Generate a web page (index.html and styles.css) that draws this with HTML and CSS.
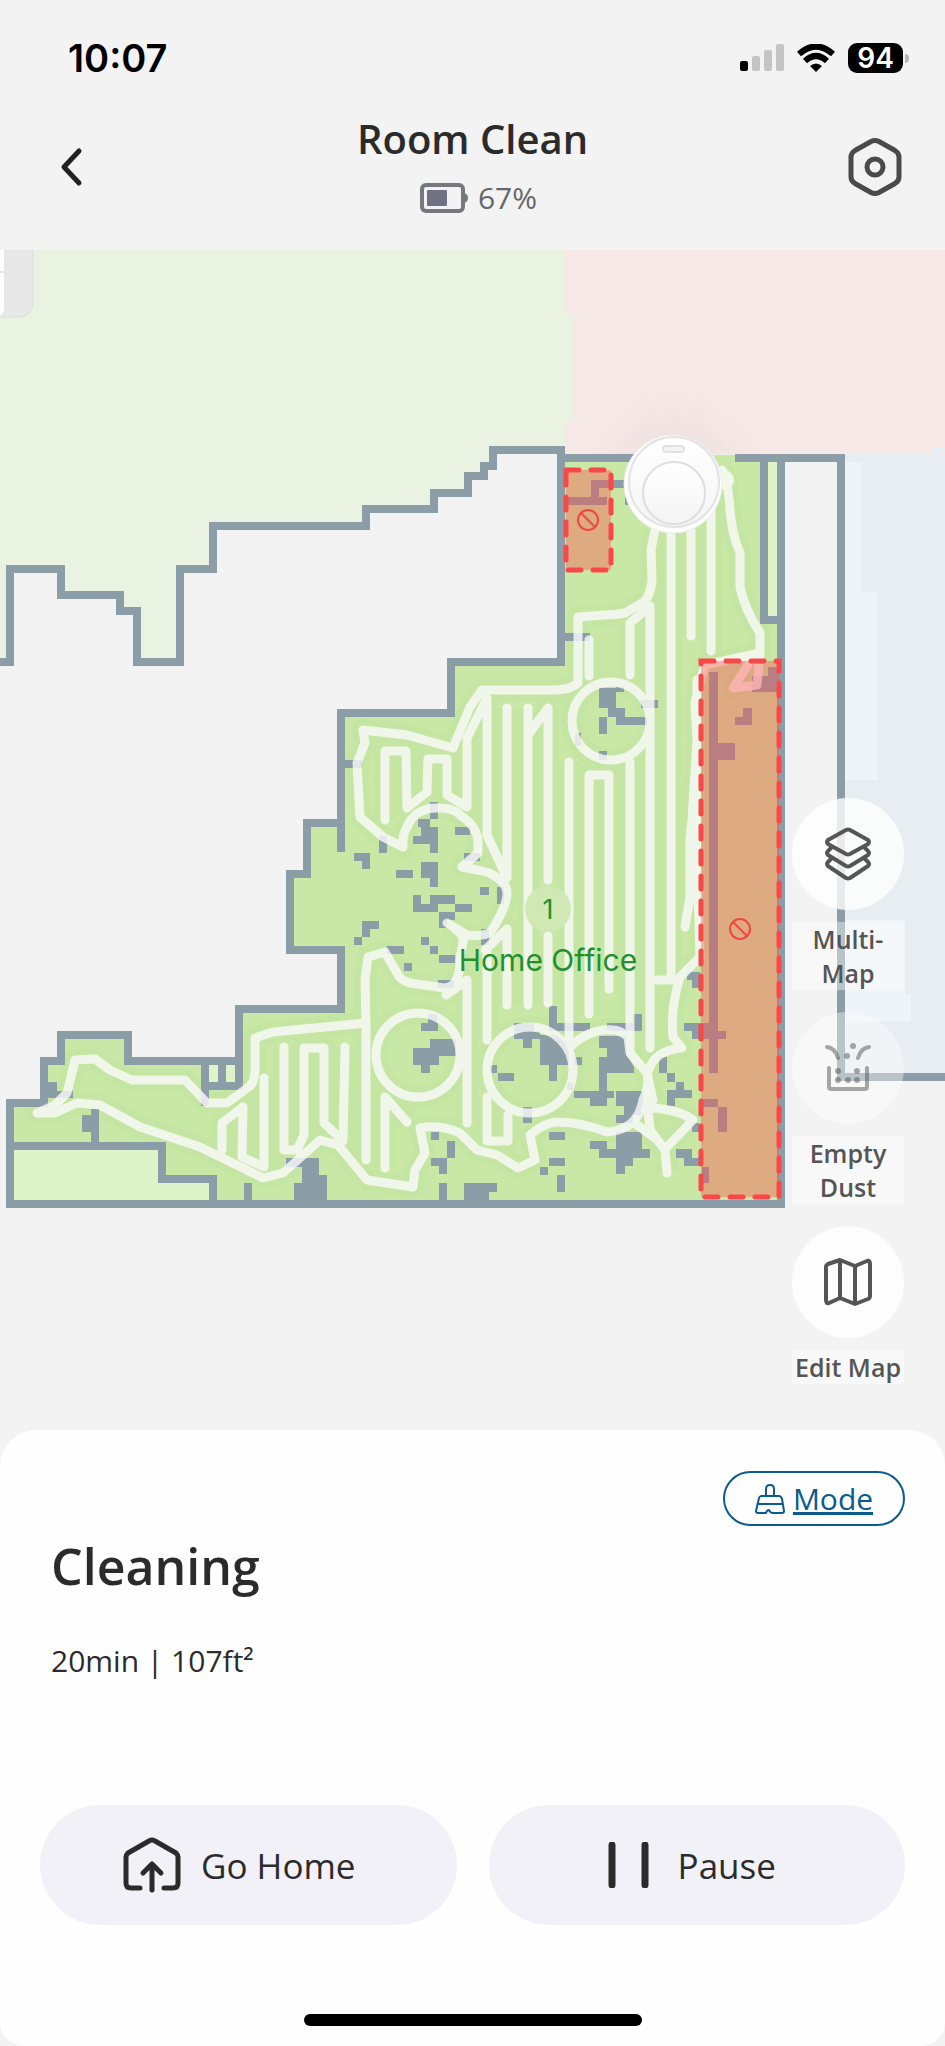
FILE: index.html
```html
<!DOCTYPE html>
<html lang="en">
<head>
    <meta charset="UTF-8">
    <meta name="viewport" content="width=device-width, initial-scale=1.0">
    <title>Room Clean</title>
    <link rel="stylesheet" href="styles.css">
</head>
<body>
    <div class="app">
        <div class="status-bar">
            <span class="clock">10:07</span>
            <div class="status-icons">
                <svg width="44" height="28" viewBox="0 0 44 28">
                    <rect x="0" y="17" width="8" height="10" rx="2" fill="#000"/>
                    <rect x="12" y="12" width="8" height="15" rx="2" fill="#c4c4c4"/>
                    <rect x="24" y="6" width="8" height="21" rx="2" fill="#c4c4c4"/>
                    <rect x="36" y="0" width="8" height="27" rx="2" fill="#c4c4c4"/>
                </svg>
                <svg width="38" height="28" viewBox="0 0 38 28">
                    <path d="M2 10Q19 -5 36 10" fill="none" stroke="#000" stroke-width="6"/>
                    <path d="M8 17Q19 7 30 17" fill="none" stroke="#000" stroke-width="6"/>
                    <path d="M13 22Q19 17 25 22L19 28Z"/>
                </svg>
                <div class="phone-battery"><span class="phone-battery-level">94</span></div>
            </div>
        </div>

        <header class="header">
            <button class="icon-button" aria-label="Back">
                <svg width="32" height="42" viewBox="0 0 32 42">
                    <path d="M23 5L8 21L23 37" fill="none" stroke="#222" stroke-width="5" stroke-linecap="round" stroke-linejoin="round"/>
                </svg>
            </button>
            <div class="header-center">
                <h1>Room Clean</h1>
                <div class="battery">
                    <svg width="48" height="30" viewBox="0 0 48 30">
                        <rect x="2" y="2" width="41" height="26" rx="4" fill="none" stroke="#77787c" stroke-width="4"/>
                        <rect x="7" y="7" width="20" height="16" rx="1" fill="#6f7282"/>
                        <path d="M44 10Q48 11 48 15Q48 19 44 20Z" fill="#77787c"/>
                    </svg>
                    <span>67%</span>
                </div>
            </div>
            <button class="icon-button settings" aria-label="Settings">
                <svg width="56" height="60" viewBox="0 0 56 60">
                    <path d="M24 4.500Q28 2.500 32 4.500L48 13.500Q52 16 52 20V40Q52 44 48 46.500L32 55.500Q28 57.500 24 55.500L8 46.500Q4 44 4 40V20Q4 16 8 13.500Z" fill="none" stroke="#4a4a4a" stroke-width="5"/>
                    <circle cx="28" cy="30" r="8" fill="none" stroke="#4a4a4a" stroke-width="5"/>
                </svg>
            </button>
        </header>

        <main class="map">
            <svg class="floor-plan" viewBox="0 250 945 1180">
                <defs>
                    <radialGradient id="glow">
                        <stop offset="0.4" stop-color="#a08888" stop-opacity="0.06"/>
                        <stop offset="1" stop-color="#a08888" stop-opacity="0"/>
                    </radialGradient>
                    <linearGradient id="robotBody" x1="0" y1="0" x2="0" y2="1">
                        <stop offset="0" stop-color="#fff"/>
                        <stop offset="1" stop-color="#f4f4f4"/>
                    </linearGradient>
                    <path id="room" d="M561 455H781V1204H10V1103H44V1061H61V1035H128V1061H239V1009H341V950H290V874H307V823H341V713H451V662H561Z"/>
                    <g id="track">
                        <path d="M655 530L651 550L652 580Q650 600 640 604L625 613Q615 615 605 615L578 617V683Q570 690 553 690H482L470 707L453 748L407 735L363 730L365 743L357 763L360 817L383 837L403 847Q402 835 407 827Q415 808 437 808Q455 808 460 815Q476 825 478 840V853L462 867Q490 872 493 875Q507 883 507 893Q507 907 490 933Q480 937 467 935L447 923"/>
                        <path d="M455 929Q465 935 463 943Q460 955 460 965Q458 988 444 988L410 983Q400 980 397 973L385 952L368 957L365 980L366 1023V1160M366 1023L273 1032L255 1038V1063Q256 1080 250 1086L227 1103H207L185 1080H132L110 1070L95 1059L75 1060L67 1093L55 1105L37 1113H55L77 1103L100 1105L140 1127L200 1147L263 1178L283 1173L320 1140L338 1145L367 1180L413 1187L415 1170L425 1153L420 1128Q440 1124 460 1133L477 1150L497 1155L518 1168L535 1160L530 1135Q545 1122 557 1122Q580 1122 607 1132Q638 1130 643 1100Q650 1085 647 1073L630 1053L628 1037Q620 1030 613 1030Q590 1028 570 1047"/>
                        <path d="M647 1073L652 1063Q660 1050 682 1048L673 1037Q670 1010 680 977L700 957M647 1073L653 1100L648 1110L650 1130L665 1150L667 1173M633 1122L655 1138M653 1108Q680 1110 693 1120L667 1147"/>
                        <circle cx="530" cy="1070" r="43"/>
                        <circle cx="418" cy="1055" r="42"/>
                        <circle cx="611" cy="721" r="39"/>
                        <path d="M222 1150V1123L243 1107L242 1157L264 1167V1078M284 1047V1150H297L304 1135V1048H324V1123L343 1141L345 1047M385 1168V1097L407 1122M467 1123V980L446 995"/>
                        <path d="M385 820V751H406L407 808L427 792L428 759H447V795L467 807V738L487 698V835L507 878V708M528 708V1005M528 735L548 708V880M487 950V1040M485 950L507 929V1005M548 936V1003M569 762V1047M589 1014V775H609V989M630 762V1050M650 1048V606L630 623V675M650 980H671V530M691 530V636M711 500V651M589 640V676M487 1097V1141H508V1115"/>
                        <path d="M722 470Q728 480 730 510Q732 535 740 553V587Q745 610 760 633V653L757 685L733 688L748 665M760 653L705 665Q700 680 695 703L697 740L692 820L690 840V897L685 927M697 680V860M700 957L696 830"/>
                    </g>
                </defs>

                <!-- neighbouring rooms -->
                <path d="M0 250H565V313H573V421H565V450H493V466H484V476H468V493H434V509H366V526H213V569H180V662H137V611H120V595H61V569H10V662H0Z" fill="#eaf3e2"/>
                <path d="M841 454H931V447H945V1077H841Z" fill="#e7edf1"/>
                <path d="M565 250H945V447H931V454H565V421H573V313H565Z" fill="#f5e8e6"/>
                <path d="M845 462H862V592H878V780H845Z" fill="#eff4f8"/>
                <path d="M845 920H905V995H911V1021H845Z" fill="#eff4f8"/>
                <path d="M785 454H841V1077H785Z" fill="#f3f3f3"/>
                <circle cx="673" cy="475" r="88" fill="url(#glow)"/>

                <!-- active room -->
                <use href="#room" fill="#c9e8a6"/>
                <use href="#track" class="swept"/>
                <path d="M768 462H777V616H768ZM14 1150H158V1183H209V1200H14ZM209 1065H218V1082H209ZM226 1065H235V1082H226Z" fill="#dff3c9"/>

                <!-- obstacles -->
                <path class="obstacle" d="M591 480h33v8h-33zM591 488h8v9h-8zM565 497h42v8h-42zM625 497h6v8h-6zM565 633h25v8h-25zM599 688h17v20h-17zM616 687h8v5h-8zM608 708h17v9h-17zM616 717h31v8h-31zM599 717h8v17h-8zM575 733h6v13h-6zM599 751h8v9h-8zM641 700h17v8h-17z"/>
                <path class="obstacle" d="M709 672h9v401h-9zM718 743h17v17h-17zM768 667h10v9h-10zM752 676h26v16h-26zM735 717h17v8h-17zM743 708h9v9h-9zM684 1023h30v8h-30zM692 1031h34v8h-34zM702 1099h16v8h-16zM718 1107h9v25h-9zM702 1167h7v16h-7zM692 1123h7v9h-7zM687 972h13v8h-13zM692 980h8v8h-8z"/>
                <path class="obstacle" d="M549 1006h8v20h-8zM549 1023h41v8h-41zM633 1014h9v17h-9zM607 1023h27v8h-27zM514 1023h20v8h-20zM514 1031h26v8h-26zM523 1039h9v9h-9zM540 1035h16l9 8l4 10v12h-29zM549 1065h8v16h-8zM574 1057h8v8h-8zM498 1073h16v8h-16zM490 1065h7v8h-7zM599 1036h27v12h-27zM607 1048h20v9h-20zM599 1057h29l6 10v6h-35zM599 1073h8v18h-8zM574 1091h40v7h-40zM590 1098h17v8h-17zM616 1091h27v15h-27zM624 1106h17v9h-17zM616 1115h17v8h-17zM567 1083h6v7h-6zM523 1107h9v16h-9z"/>
                <path class="obstacle" d="M659 1057h8v16h-8zM667 1073h8v9h-8zM676 1082h8v8h-8zM667 1090h25v8h-25zM667 1098h8v8h-8zM616 1132h26v25h-26zM616 1157h17v9h-17zM616 1166h9v8h-9zM599 1149h51v9h-51zM590 1141h17v8h-17zM676 1149h16v9h-16zM684 1158h16v8h-16zM549 1132h16v8h-16zM549 1158h16v8h-16zM540 1167h8v8h-8zM557 1175h8v17h-8zM431 1132h8v8h-8zM447 1141h8v17h-8zM431 1158h16v8h-16zM439 1166h8v8h-8zM439 1183h8v17h-8zM464 1183h33v9h-33zM464 1192h25v8h-25z"/>
                <path class="obstacle" d="M421 1023h17v8h-17zM430 1039h26v17h-26zM413 1048h26v17h-26zM421 1064h9v9h-9zM428 1014h9v9h-9zM438 980h16v8h-16zM404 963h8v8h-8zM439 955h16v8h-16zM286 1158h33v9h-33zM302 1167h17v8h-17zM302 1175h25v8h-25zM294 1183h33v17h-33zM244 1183h8v17h-8zM82 1115h16v17h-16zM91 1109h8v34h-8zM48 1082h9v9h-9zM48 1091h25v7h-25z"/>
                <path class="obstacle" d="M430 802h8v17h-8zM418 819h12v8h-12zM421 827h17v17h-17zM413 836h25v8h-25zM430 844h8v9h-8zM455 827h15v8h-15zM464 853h16v8h-16zM379 836h8v17h-8zM354 853h16v8h-16zM362 861h8v8h-8zM396 870h17v8h-17zM421 862h17v16h-17zM430 878h8v9h-8zM480 887h9v8h-9zM497 887h7v17h-7zM413 895h8v17h-8zM430 895h25v9h-25zM413 904h25v8h-25zM455 904h17v8h-17zM439 912h16v8h-16zM439 920h8v8h-8zM362 921h17v8h-17zM362 929h8v8h-8zM354 937h8v8h-8zM421 937h8v8h-8zM430 946h8v8h-8zM481 929h8v16h-8zM387 946h17v8h-17zM345 760h17v8h-17z"/>

                <!-- walls -->
                <path class="wall" d="M0 662H10V569H61V595H120V611H137V662H180V569H213V526H366V509H434V493H468V476H484V466H493V450H561V662H451V713H341V852M341 823H307V874H290V950H341V1009H239V1061H128V1035H61V1061H44V1103H10V1204H781V458M561 458H636M735 458H841V1077H945M764 458V620H781M239 1057V1086H205M205 1061V1106M222 1061V1086M10 1146H162V1179H213V1204"/>

                <use href="#track" class="track"/>

                <!-- no-go zones -->
                <g class="zone">
                    <rect x="566" y="470" width="45" height="100"/>
                    <rect x="701" y="661" width="78" height="536"/>
                </g>
                <g class="forbidden">
                    <circle cx="588" cy="520" r="10"/>
                    <path d="M581 513L595 527"/>
                    <circle cx="740" cy="929" r="10"/>
                    <path d="M733 922L747 936"/>
                </g>

                <!-- dock, partly off screen -->
                <path d="M0 250H33V302Q33 317 17 317H0Z" fill="#e8e8e8" stroke="#dedede"/>
                <path d="M0 250H4V311L0 316Z" fill="#fff"/>
                <path d="M0 272H4" stroke="#ccc"/>

                <!-- robot -->
                <circle cx="724" cy="480" r="10" fill="#f2f9ea"/>
                <circle cx="673" cy="484" r="49" fill="#fdfdfd" stroke="#efefef"/>
                <circle cx="674" cy="482" r="45" fill="url(#robotBody)" stroke="#e3e3e6" stroke-width="2"/>
                <circle cx="674" cy="493" r="31" fill="url(#robotBody)" stroke="#dedee1" stroke-width="2"/>
                <rect x="663" y="446" width="21" height="6" rx="3" fill="#f4f4f4" stroke="#e2e2e5" stroke-width="2"/>

                <circle cx="548" cy="909" r="23" fill="#cfe8b4"/>
                <text x="548" y="919" class="room-number">1</text>
                <text x="548" y="971" class="room-name">Home Office</text>
            </svg>

            <nav class="map-tools">
                <button class="tool">
                    <span class="tool-icon">
                        <svg width="48" height="54" viewBox="0 0 48 54">
                            <g fill="none" stroke="#555" stroke-width="4" stroke-linejoin="round">
                                <path d="M22 3Q24 2 26 3L44 13Q46 15 44 17L26 27Q24 28 22 27L4 17Q2 15 4 13Z"/>
                                <path d="M8 20L4 24Q2 26 4 28L22 39Q24 40 26 39L44 28Q46 26 44 24L40 20"/>
                                <path d="M8 31L4 35Q2 37 4 39L22 51Q24 52 26 51L44 39Q46 37 44 35L40 31"/>
                            </g>
                        </svg>
                    </span>
                    <span class="tool-label">Multi-Map</span>
                </button>
                <button class="tool" disabled>
                    <span class="tool-icon">
                        <svg width="48" height="50" viewBox="0 0 48 50">
                            <g fill="none" stroke="#555" stroke-width="4" stroke-linecap="round" stroke-linejoin="round">
                                <path d="M5 25V44Q5 46 7 46H41Q43 46 43 44V25"/>
                                <path d="M3 4Q11 5 14 15M45 4Q37 5 34 15"/>
                            </g>
                            <g fill="#555">
                                <circle cx="29" cy="3" r="3"/>
                                <circle cx="23" cy="13" r="3"/>
                                <circle cx="14" cy="28" r="3"/>
                                <circle cx="33" cy="28" r="3"/>
                                <circle cx="14" cy="37" r="3"/>
                                <circle cx="24" cy="37" r="3"/>
                                <circle cx="33" cy="37" r="3"/>
                            </g>
                        </svg>
                    </span>
                    <span class="tool-label">Empty Dust</span>
                </button>
                <button class="tool">
                    <span class="tool-icon">
                        <svg width="50" height="48" viewBox="0 0 50 48">
                            <path d="M3 9Q3 7 5 6L17 2L32 8L44 3Q47 2 47 6V38Q47 40 45 41L32 46L17 40L6 45Q3 46 3 42ZM17 2V40M32 8V46" fill="none" stroke="#555" stroke-width="4" stroke-linejoin="round"/>
                        </svg>
                    </span>
                    <span class="tool-label">Edit Map</span>
                </button>
            </nav>
        </main>

        <section class="sheet">
            <a class="mode" href="#mode">
                <svg width="30" height="32" viewBox="0 0 30 32">
                    <path d="M11 13V6Q11 2 15 2Q19 2 19 6V13M6 13H24Q26 13 27 16L29 28Q29 30 27 30H18Q15 30 14 27Q12 27 11 30H3Q1 30 1 28L4 15Q5 13 6 13ZM3 21H27" fill="none" stroke="#0b5c8c" stroke-width="2" stroke-linejoin="round"/>
                </svg>
                <span>Mode</span>
            </a>
            <h2>Cleaning</h2>
            <p class="summary">20min | 107ft²</p>
            <div class="actions">
                <button class="action">
                    <svg width="58" height="56" viewBox="0 0 58 56">
                        <g fill="none" stroke="#2b2b2b" stroke-width="5" stroke-linecap="round" stroke-linejoin="round">
                            <path d="M17 51H8Q3 51 3 46V20Q3 18 5 16L26 4Q29 2 32 4L53 16Q55 18 55 20V46Q55 51 50 51H41"/>
                            <path d="M29 53V28M20 36L29 27L38 36"/>
                        </g>
                    </svg>
                    <span>Go Home</span>
                </button>
                <button class="action pause">
                    <svg width="42" height="46" viewBox="0 0 42 46">
                        <path d="M4 3V43M37 3V43" fill="none" stroke="#2b2b2b" stroke-width="7" stroke-linecap="round"/>
                    </svg>
                    <span>Pause</span>
                </button>
            </div>
            <div class="home-indicator"></div>
        </section>
    </div>
</body>
</html>
```
FILE: styles.css
```css
* {
    box-sizing: border-box;
}
body {
    margin: 0;
    background: #f3f3f3;
    color: #2b2b2b;
    font-family: 'Open Sans', 'Noto Sans', sans-serif;
}
button {
    border: none;
    padding: 0;
    background: none;
    color: inherit;
    font-family: inherit;
    cursor: pointer;
}
svg {
    display: block;
    flex-shrink: 0;
}
.app {
    display: flex;
    flex-direction: column;
    min-height: 100vh;
}

/* status bar */
.status-bar {
    display: flex;
    align-items: center;
    justify-content: space-between;
    height: 116px;
    padding: 0 36px 0 68px;
    color: #000;
    font-family: Inter, 'Liberation Sans', sans-serif;
    font-weight: 600;
}
.clock {
    font-size: 38px;
}
.status-icons {
    display: flex;
    align-items: center;
    gap: 13px;
}
.phone-battery {
    display: flex;
    align-items: center;
    gap: 2px;
}
.phone-battery::after {
    content: '';
    width: 4px;
    height: 9px;
    border-radius: 0 5px 5px 0;
    background: #b5b5b5;
}
.phone-battery-level {
    width: 55px;
    border-radius: 9px;
    background: #000;
    color: #fff;
    font-size: 28px;
    line-height: 30px;
    text-align: center;
}

/* header */
.header {
    display: grid;
    grid-template-columns: 1fr auto 1fr;
    align-items: center;
    height: 134px;
    padding: 0 42px 32px;
}
.header-center {
    display: flex;
    flex-direction: column;
    align-items: center;
    gap: 16px;
}
.header h1 {
    margin: 0;
    font-size: 40px;
    font-weight: 600;
    line-height: 46px;
}
.icon-button {
    display: flex;
    justify-self: start;
    padding-left: 14px;
}
.settings {
    justify-self: end;
    padding-left: 0;
}
.battery {
    display: flex;
    align-items: center;
    gap: 10px;
    padding-left: 12px;
    color: #66676b;
    font-size: 30px;
    line-height: 40px;
}

/* map */
.map {
    position: relative;
}
.floor-plan {
    width: 100%;
    height: auto;
}
.wall {
    fill: none;
    stroke: #8b9da6;
    stroke-width: 8;
    stroke-linecap: butt;
}
.obstacle {
    fill: #8b9da6;
}
.swept {
    fill: none;
    stroke: #c2e3a0;
    stroke-width: 22;
    stroke-linejoin: round;
    opacity: 0.5;
}
.track {
    fill: none;
    stroke: #fbfbfd;
    stroke-width: 9;
    stroke-linecap: round;
    stroke-linejoin: round;
    opacity: 0.8;
}
.zone {
    fill: rgba(255, 77, 77, 0.4);
    stroke: #fa4848;
    stroke-width: 5;
    stroke-dasharray: 13 12;
    stroke-linecap: round;
}
.forbidden {
    fill: none;
    stroke: #f0483e;
    stroke-width: 2;
}
.room-number,
.room-name {
    fill: #23902f;
    font-family: Inter, 'Liberation Sans', sans-serif;
    text-anchor: middle;
}
.room-number {
    font-size: 27px;
}
.room-name {
    font-size: 30px;
}
.map-tools {
    position: absolute;
    top: 548px;
    right: 41px;
    display: flex;
    flex-direction: column;
    gap: 22px;
    width: 112px;
}
.tool {
    display: flex;
    flex-direction: column;
    gap: 12px;
    color: #555;
}
.tool-icon {
    display: flex;
    align-items: center;
    justify-content: center;
    width: 112px;
    height: 112px;
    border-radius: 50%;
    background: rgba(255, 255, 255, 0.8);
}
.tool:disabled {
    color: #555;
    cursor: default;
}
.tool:disabled .tool-icon {
    background: rgba(255, 255, 255, 0.4);
}
.tool:disabled svg {
    opacity: 0.5;
}
.tool-label {
    width: 112px;
    background: rgba(255, 255, 255, 0.4);
    font-size: 25px;
    font-weight: 600;
    line-height: 34px;
}

/* bottom sheet */
.sheet {
    display: flex;
    flex: 1;
    flex-direction: column;
    padding: 41px 40px 20px;
    border-radius: 36px 36px 24px 24px;
    background: #fefefe;
}
.mode {
    display: flex;
    align-items: center;
    justify-content: center;
    align-self: flex-end;
    gap: 8px;
    width: 182px;
    height: 55px;
    border: 2px solid #0b5c8c;
    border-radius: 28px;
    color: #0b5c8c;
    font-size: 30px;
}
.sheet h2 {
    margin: 6px 0 0;
    padding-left: 11px;
    font-size: 50px;
    font-weight: 600;
    line-height: 68px;
}
.summary {
    margin: 39px 0 0;
    padding-left: 11px;
    font-size: 30px;
    line-height: 44px;
}
.actions {
    display: grid;
    grid-template-columns: 1fr 1fr;
    gap: 32px;
    margin-top: 122px;
}
.action {
    display: flex;
    align-items: center;
    justify-content: center;
    gap: 20px;
    height: 120px;
    padding-right: 18px;
    border-radius: 60px;
    background: #f2f1f7;
    font-size: 35px;
}
.pause {
    gap: 28px;
    padding-right: 10px;
}
.home-indicator {
    width: 338px;
    height: 12px;
    margin: auto auto 0;
    border-radius: 6px;
    background: #000;
}
```
